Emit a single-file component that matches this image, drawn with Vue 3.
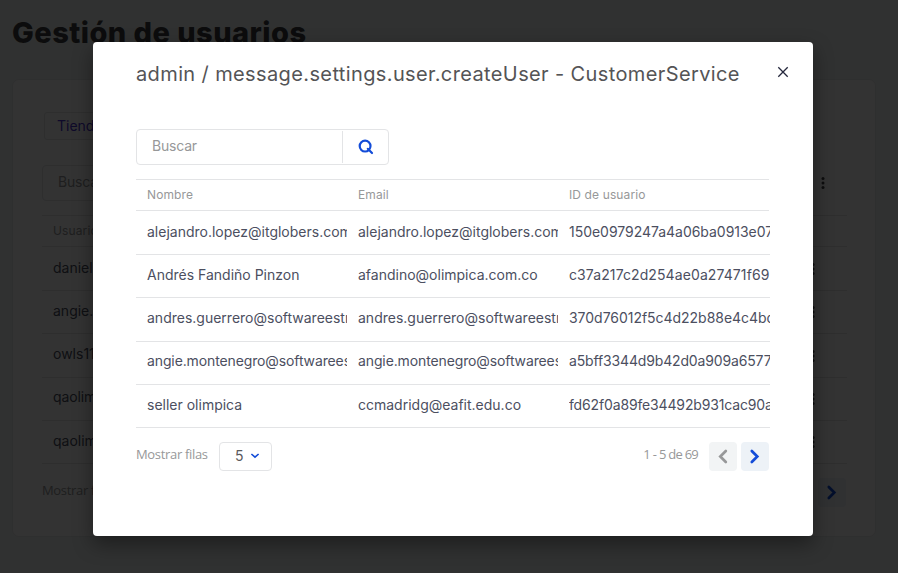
<script setup>
const users = [
  { name: 'alejandro.lopez@itglobers.com', email: 'alejandro.lopez@itglobers.com', id: '150e0979247a4a06ba0913e07' },
  { name: 'Andrés Fandiño Pinzon', email: 'afandino@olimpica.com.co', id: 'c37a217c2d254ae0a27471f69' },
  { name: 'andres.guerrero@softwareestr', email: 'andres.guerrero@softwareestr', id: '370d76012f5c4d22b88e4c4bd' },
  { name: 'angie.montenegro@softwarees', email: 'angie.montenegro@softwarees', id: 'a5bff3344d9b42d0a909a6577a' },
  { name: 'seller olimpica', email: 'ccmadridg@eafit.edu.co', id: 'fd62f0a89fe34492b931cac90a' },
]
const pageRows = ['daniel', 'angie.', 'owls11', 'qaolim', 'qaolim']
</script>

<template>
  <div class="screen">
    <main class="page">
      <h1>Gestión de usuarios</h1>
      <section class="card">
        <div class="tab">Tienda</div>
        <div class="toolbar">
          <div class="search page-search"><span class="placeholder">Buscar</span></div>
          <svg class="kebab" width="4" height="14" viewBox="0 0 4 14"><circle cx="2" cy="2.6" r="1.5" /><circle cx="2" cy="7" r="1.5" /><circle cx="2" cy="11.4" r="1.5" /></svg>
        </div>
        <div class="table">
          <div class="row head"><span class="cell">Usuario</span></div>
          <div v-for="(r, i) in pageRows" :key="i" class="row">
            <span class="cell">{{ r }}</span>
            <svg class="row-dots" width="4" height="14" viewBox="0 0 4 14"><circle cx="2" cy="2.6" r="1.5" /><circle cx="2" cy="7" r="1.5" /><circle cx="2" cy="11.4" r="1.5" /></svg>
          </div>
        </div>
        <div class="footer">
          <span class="small rows-label">Mostrar filas</span>
          <span class="pager next"><svg width="28" height="29" viewBox="0 0 28 29"><path d="M10.8 9 L16.3 14.5 L10.8 20" /></svg></span>
        </div>
      </section>
    </main>

    <div class="overlay">
      <div class="modal">
        <header>
          <h2>admin / message.settings.user.createUser - CustomerService</h2>
          <svg class="close" width="12" height="12" viewBox="0 0 12 12"><path d="M1.3 1.3 L10.7 10.7 M10.7 1.3 L1.3 10.7" /></svg>
        </header>
        <div class="search">
          <span class="placeholder">Buscar</span>
          <span class="search-button">
            <svg width="16" height="16" viewBox="0 0 16 16"><circle cx="7.1" cy="7.1" r="5.4" /><path d="M9.8 9.8 L14 14" /></svg>
          </span>
        </div>
        <div class="table">
          <div class="row head">
            <span class="cell">Nombre</span><span class="cell">Email</span><span class="cell">ID de usuario</span>
          </div>
          <div v-for="u in users" :key="u.id" class="row">
            <span class="cell">{{ u.name }}</span><span class="cell">{{ u.email }}</span><span class="cell id">{{ u.id }}</span>
          </div>
        </div>
        <div class="footer">
          <span class="small rows-label">Mostrar filas</span>
          <span class="select"><span class="value">5</span><svg width="10" height="8" viewBox="0 0 10 8"><path d="M1.4 2 L5 5.2 L8.6 2" /></svg></span>
          <span class="small count">1 - 5 de 69</span>
          <span class="pager prev"><svg width="28" height="29" viewBox="0 0 28 29"><path d="M16.8 9 L11.3 14.5 L16.8 20" /></svg></span>
          <span class="pager next"><svg width="28" height="29" viewBox="0 0 28 29"><path d="M10.8 9 L16.3 14.5 L10.8 20" /></svg></span>
        </div>
      </div>
    </div>
  </div>
</template>

<style>
body { overflow: hidden; }
</style>

<style scoped>
.screen, .screen * { box-sizing: border-box; }
.screen {
  position: relative;
  width: 898px;
  height: 573px;
  overflow: hidden;
  background: #eff5f3;
  color: #4c4f5f;
  font-family: Inter, "Liberation Sans", sans-serif;
  font-size: 14px;
}
.page { padding: 12px 22px 0 12px; }
h1 { margin: 0; height: 67px; line-height: 42px; font-size: 29px; font-weight: 800; letter-spacing: 0.46px; color: #3f3f40; white-space: nowrap; }
.card {
  width: 864px;
  height: 458px;
  padding: 32px 28px 0 29px;
  border: 1px solid #e7e8ea;
  border-radius: 7px;
  background: #fff;
}
.tab {
  width: 90px;
  height: 28px;
  margin-left: 2px;
  padding-left: 12px;
  line-height: 26px;
  border: 1px solid #e3e4e6;
  border-radius: 3px;
  color: #4a35d0;
}
.toolbar { display: flex; align-items: center; justify-content: space-between; margin-top: 25px; padding-right: 22px; }
.kebab, .row-dots { fill: #3f3f40; }
.row-dots { margin-left: auto; margin-right: 32px; }

.overlay {
  position: absolute;
  inset: 0;
  padding: 42px 0 0 93px;
  background: rgba(0, 0, 0, 0.8);
}
.modal {
  width: 720px;
  height: 494px;
  padding: 16px 44px 0 43px;
  border-radius: 4px;
  background: #fff;
  box-shadow: 0 8px 20px rgba(0, 0, 0, 0.4);
}
header { display: flex; justify-content: space-between; height: 71px; margin-right: -20px; }
h2 { margin: 0; font-size: 20px; line-height: 32px; font-weight: 400; letter-spacing: 0.38px; color: #545456; white-space: nowrap; }
.close { margin: 8px 0 0; fill: none; stroke: #25283d; stroke-width: 1.3; }

.search {
  display: flex;
  width: 253px;
  height: 36px;
  padding: 1px 0 1px 15px;
  border: 1px solid #e3e4e6;
  border-radius: 4px;
}
.placeholder { flex: 1; line-height: 30px; letter-spacing: -0.2px; color: #979899; }
.search-button {
  display: flex;
  align-items: center;
  justify-content: center;
  width: 46px;
  border-left: 1px solid #e3e4e6;
}
.search-button svg { fill: none; stroke: #134cd8; stroke-width: 2.2; stroke-linecap: round; }

.table { margin-top: 14px; border-top: 1px solid #e3e4e6; }
.row { display: flex; align-items: center; height: 43px; border-bottom: 1px solid #e3e4e6; }
.row:nth-child(2), .row:nth-child(4) { height: 44px; }
.row.head { height: 31px; font-size: 12px; letter-spacing: 0.12px; color: #979899; }
.cell {
  flex-shrink: 0;
  width: 200px;
  margin-left: 11px;
  overflow: hidden;
  white-space: nowrap;
  line-height: 24px;
}
.row:not(.head) .cell { height: 26px; }
.row:nth-child(4) .cell, .row:nth-child(5) .cell { height: 28px; }
.row:nth-child(5) .cell { line-height: 23px; letter-spacing: -0.12px; }
.row .cell.id { width: 201px; letter-spacing: -0.03px; }
.row:nth-child(3) .cell.id { letter-spacing: 0.1px; }
.row:nth-child(5) .cell.id, .row:nth-child(6) .cell.id { letter-spacing: -0.15px; }
.modal .row:not(.head) { width: 634px; }

.footer { display: flex; margin-top: 14px; height: 29px; }
.small { font-family: "Open Sans", sans-serif; font-size: 13px; letter-spacing: -0.33px; line-height: 25px; color: #979899; white-space: nowrap; }
.select {
  display: flex;
  align-items: center;
  gap: 7px;
  width: 53px;
  margin-left: 11px;
  padding-left: 15px;
  border: 1px solid #e3e4e6;
  border-radius: 4px;
  color: #5a5a5c;
}
.value { width: 8px; height: 19px; }
.select svg { fill: none; stroke: #134cd8; stroke-width: 1.6; margin-top: -1px; }
.rows-label { width: 72px; }
.count { margin-left: auto; margin-right: 11px; letter-spacing: -0.8px; word-spacing: 0.2px; }
.pager { width: 28px; height: 29px; border-radius: 4px; background: #f2f4f5; }
.pager svg { display: block; fill: none; stroke-width: 2.7; stroke: #979899; stroke-linecap: round; }
.pager.next { margin-left: 4px; background: #edf2f7; }
.pager.next svg { stroke: #134cd8; }
.card .pager.next { margin-left: auto; margin-right: 1px; }
</style>
